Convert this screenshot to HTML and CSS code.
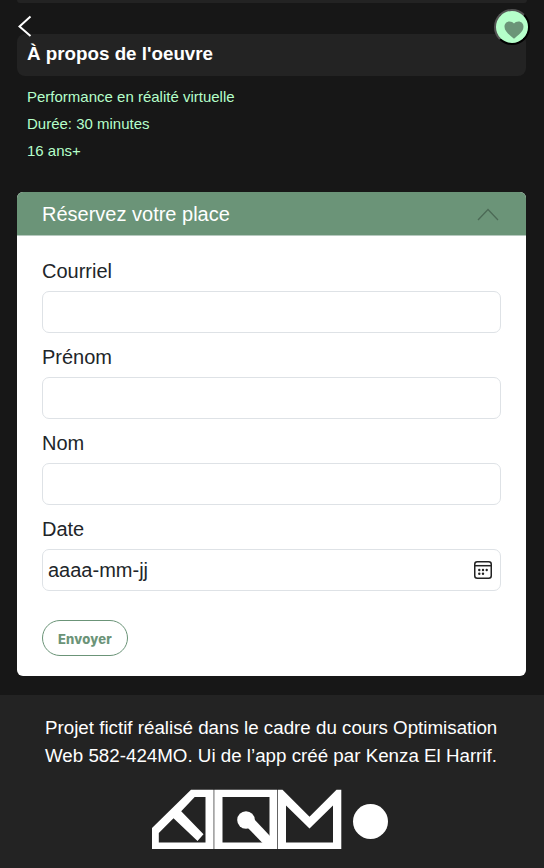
FILE: index.html
```html
<!DOCTYPE html>
<html lang="fr">
<head>
<meta charset="utf-8">
<title>Réservation</title>
<link rel="stylesheet" href="styles.css">
</head>
<body>
<div class="previous"></div>
<svg class="back" viewBox="0 0 14 22"><path d="M12.5 1.500 1.500 11.500l11 9.500"/></svg>
<button class="favorite" aria-label="Favori"><svg viewBox="0 0 20 18"><path d="M10 17.8C6 14 .5 10.600.5 5.700C.5 2.600 2.700.5 5.400.5C7.500.5 9 1.500 10 2.400C11 1.500 12.500.5 14.600.5C17.300.5 19.500 2.600 19.500 5.700C19.500 10.600 14 14 10 17.800Z"/></svg></button>
<main>
  <h2 class="title">À propos de l'oeuvre</h2>
  <div class="details">
    <p>Performance en réalité virtuelle</p>
    <p>Durée: 30 minutes</p>
    <p>16 ans+</p>
  </div>
  <section class="card">
    <header class="card-header">
      <span>Réservez votre place</span>
      <svg class="chevron" viewBox="0 0 22 13"><path d="M1 12 11 1.500 21 12"/></svg>
    </header>
    <form class="form">
      <label>Courriel</label><div class="field"></div>
      <label>Prénom</label><div class="field"></div>
      <label>Nom</label><div class="field"></div>
      <label>Date</label>
      <div class="field"><span>aaaa-mm-jj</span>
        <svg class="calendar" viewBox="0 0 18 18"><rect x=".75" y=".75" width="16.500" height="16.500" rx="2.500"/><path d="M1 4.700h16"/><g><circle cx="5.300" cy="9" r="1.200"/><circle cx="9" cy="9" r="1.200"/><circle cx="12.700" cy="9" r="1.200"/><circle cx="5.300" cy="12.700" r="1.200"/><circle cx="9" cy="12.700" r="1.200"/></g></svg>
      </div>
      <button class="send" type="button">Envoyer</button>
    </form>
  </section>
</main>
<footer>
  <p>Projet fictif réalisé dans le cadre du cours Optimisation<br>Web 582-424MO. Ui de l’app créé par Kenza El Harrif.</p>
  <svg class="logo" viewBox="152 789 236 60">
    <path d="M152 828 191 789.700h22.600V849H152V828ZM194.700 797 181.200 811.200 203.500 834.300 197.500 841 173.500 818.300 158.800 833v9.500h46.700V797Z" fill-rule="evenodd"/>
    <path fill-rule="evenodd" d="M214.300 789.700h63V849h-63ZM222.500 797v45.500h47V797Z"/>
    <circle cx="246" cy="820" r="8.800"/>
    <path d="M254 819 270 836v7h-7.500L246 826Z"/>
    <path fill-rule="evenodd" d="M278 789.700h4.500l27 27 27-27h4.800V849H278ZM286 805.500v37h47v-37l-23.500 23Z"/>
    <circle cx="370.500" cy="821.500" r="17.500"/>
  </svg>
</footer>
</body>
</html>
```
FILE: styles.css
```css
* { box-sizing: border-box; }
body { margin: 0; width: 544px; height: 868px; overflow: hidden; background: #171717; font-family: "Liberation Sans", Arial, sans-serif; display: flex; flex-direction: column; position: relative; }
p, h2 { margin: 0; }
.previous { height: 3px; flex-shrink: 0; margin: 0 17px; background: #232323; border-radius: 0 0 9px 9px; }
.back { position: absolute; left: 18px; top: 15px; width: 14px; height: 22px; fill: none; stroke: #fff; stroke-width: 2; }
.favorite { position: absolute; left: 494px; top: 9px; width: 36px; height: 36px; padding: 0; border: 2px outset #000; border-radius: 50%; background: #b5ffca; }
.favorite svg { position: absolute; left: 8px; top: 10px; width: 20px; height: 18px; fill: #6b9478; }
main { margin: 31px 18px 0 17px; }
.title { height: 42px; padding-left: 10px; border-radius: 8px; background: #232323; color: #fff; font-size: 18.8px; line-height: 40px; }
.details { padding: 7px 10px 0; height: 116px; color: #b5ffca; font-size: 15px; line-height: 27.2px; }
.card { height: 484px; border-radius: 6px; overflow: hidden; background: #fff; }
.card-header { height: 44px; padding: 2px 27px 0 25px; display: flex; align-items: center; justify-content: space-between; background: #6b9478; border-bottom: 1px solid #b7c9bf; color: #fff; font-size: 20px; }
.chevron { width: 22px; height: 13px; fill: none; stroke: #4c6a56; stroke-width: 1.3; }
.form { padding: 20px 25px 0; color: #212529; font-size: 20px; display: flex; flex-direction: column; }
.form label { height: 35px; line-height: 30px; }
.field { height: 42px; margin-bottom: 9px; border: 1px solid #dee2e6; border-radius: 7px; padding: 0 8px 0 5px; display: flex; align-items: center; justify-content: space-between; }
.calendar { width: 18px; height: 18px; fill: none; stroke: #222; stroke-width: 1.5; }
.calendar g { fill: #222; stroke: none; }
.send { width: 86px; height: 36px; margin-top: 20px; padding: 1px 0 0; border: 1px solid #6b9478; border-radius: 18px; background: #fff; color: #6b9478; font: 800 13px Inter, sans-serif; letter-spacing: .2px; }
footer { flex: 1; margin-top: 19px; padding-top: 19px; background: #232323; color: #fff; display: flex; flex-direction: column; align-items: center; font-size: 18.75px; line-height: 28px; }
footer p { width: 454px; white-space: nowrap; }
.logo { width: 236px; height: 60px; margin: 19px 4px 0 0; fill: #fff; }
```
